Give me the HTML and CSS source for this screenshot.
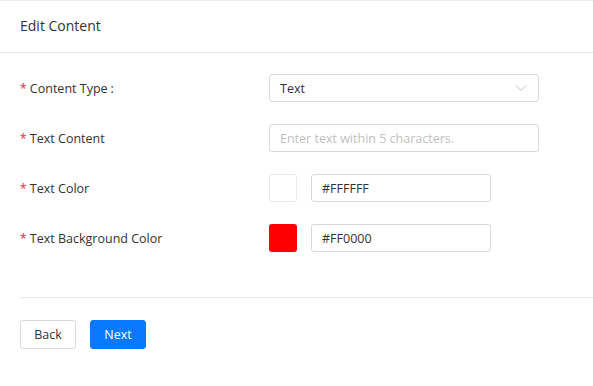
FILE: index.html
```html
<!doctype html>
<html lang="en">
<head>
<meta charset="utf-8">
<meta name="viewport" content="width=device-width, initial-scale=1">
<title>Edit Content</title>
<link rel="stylesheet" href="styles.css">
</head>
<body>

	<div class="panel">

		<div class="panelHead">Edit Content</div>

		<div class="form">

			<div class="row">
				<label class="label"><span class="req">*</span> Content Type<span class="colon">:</span></label>
				<div class="select">
					<span>Text</span>
					<svg class="arrow" width="12" height="8" viewBox="0 0 12 8"><path d="M1 1.5 L6 6.5 L11 1.5" fill="none" stroke="#bfbfbf" stroke-width="1"/></svg>
				</div>
			</div>

			<div class="row">
				<label class="label"><span class="req">*</span> Text Content</label>
				<input class="input wide" type="text" placeholder="Enter text within 5 characters.">
			</div>

			<div class="row">
				<label class="label"><span class="req">*</span> Text Color</label>
				<span class="swatch white"></span>
				<input class="input hex" type="text" value="#FFFFFF">
			</div>

			<div class="row">
				<label class="label"><span class="req">*</span> Text Background Color</label>
				<span class="swatch red"></span>
				<input class="input hex" type="text" value="#FF0000">
			</div>

		</div>

		<div class="foot">
			<button class="btn">Back</button>
			<button class="btn primary">Next</button>
		</div>

	</div>

</body>
</html>
```

FILE: styles.css
```css
	body { margin: 0; font: 12.5px "Open Sans", "Liberation Sans", sans-serif; color: #333; background: #fff; }

	.panel { border-top: 1px solid #eee; }
	.panelHead { height: 51px; line-height: 50px; padding: 0 20px; border-bottom: 1px solid #e8e8e8; font-size: 14px; color: #333; }

	.form { padding: 21px 0 1px 20px; }
	.row { display: flex; align-items: center; height: 28px; margin-bottom: 22px; }
	.row:last-child { margin-bottom: 0; }
	.label { width: 249px; flex: none; }
	.req { color: #f5222d; font-size: 12px; }
	.colon { margin-left: 3px; }

	.select, .input { box-sizing: border-box; height: 28px; border: 1px solid #d9d9d9; border-radius: 3px; font: 12.5px "Open Sans", "Liberation Sans", sans-serif; color: #333; background: #fff; }
	.select { width: 270px; display: flex; align-items: center; justify-content: space-between; padding: 0 11px 0 10px; }
	.input { padding: 0 10px; outline: none; }
	.input::placeholder { color: #bfbfbf; }
	.wide { width: 270px; }
	.hex { width: 180px; }

	.swatch { box-sizing: border-box; width: 28px; height: 28px; border-radius: 3px; margin-right: 14px; flex: none; }
	.white { border: 1px solid #e8e8e8; background: #fff; }
	.red { background: #ff0000; }

	.foot { margin: 44px 0 0 20px; padding-top: 22px; border-top: 1px solid #e8e8e8; display: flex; gap: 14px; }
	.btn { box-sizing: border-box; width: 56px; height: 29px; border: 1px solid #d9d9d9; border-radius: 3px; background: #fff; color: #333; font: 12.5px "Open Sans", "Liberation Sans", sans-serif; padding: 0; cursor: pointer; }
	.primary { background: #0a78ff; border-color: #0a78ff; color: #fff; }
```
